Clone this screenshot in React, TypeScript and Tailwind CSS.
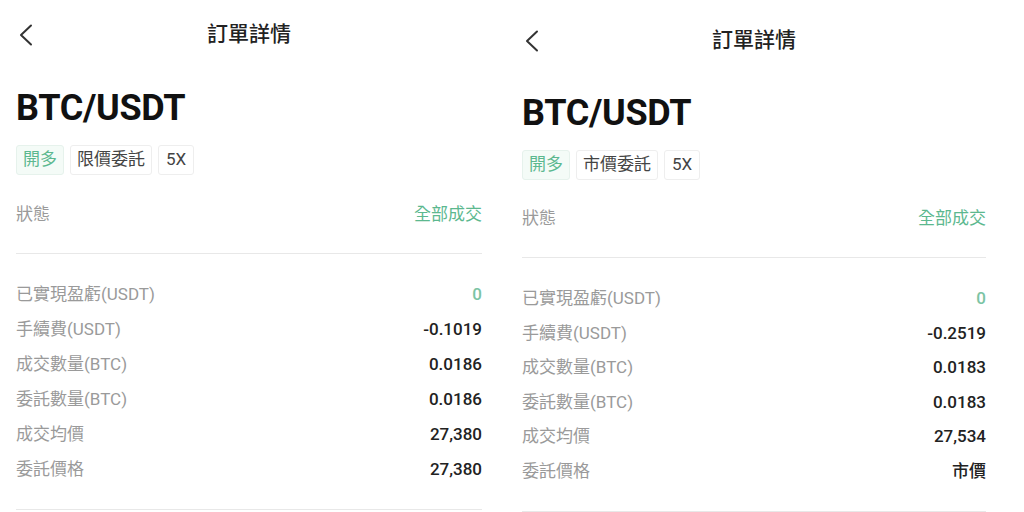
import React from "react";

type Row = { label: string; value: string; green?: boolean };

type OrderPanelProps = {
  orderType: string;
  rows: Row[];
  shift: string;
  rowH: string;
  width: string;
};

const font = "font-['Roboto','Noto_Sans_CJK_TC',sans-serif]";

const ChevronLeft = () => (
  <svg width="16" height="22" viewBox="0 0 16 22" fill="none">
    <path d="M13 1.5 3 11l10 9.5" stroke="#333" strokeWidth="2" strokeLinecap="round" strokeLinejoin="round" />
  </svg>
);

const OrderPanel: React.FC<OrderPanelProps> = ({ orderType, rows, shift, rowH, width }) => {
  return (
    <section className={`flex flex-col px-4 ${width} ${shift}`}>
      <header className="relative h-[70px] flex items-center justify-center">
        <span className="absolute left-[2px] top-[24px]">
          <ChevronLeft />
        </span>
        <h1 className="text-[21px] font-medium text-[#222]">訂單詳情</h1>
      </header>

      <h2 className="mt-[18px] text-[36px] leading-[40px] font-bold text-[#111] tracking-[-0.3px]">BTC/USDT</h2>

      <div className="mt-[17px] flex gap-[6px] h-[30px]">
        <span className="px-[6px] flex items-center rounded-[3px] border border-[#e6f2ec] bg-[#f4fbf7] text-[17px] text-[#5cb88f]">
          開多
        </span>
        <span className="px-[6px] flex items-center rounded-[3px] border border-[#eeeeee] text-[17px] text-[#444]">
          {orderType}
        </span>
        <span className="px-[7px] flex items-center rounded-[3px] border border-[#eeeeee] text-[17px] text-[#444]">
          5X
        </span>
      </div>

      <div className="mt-[22px] h-[35px] flex items-center justify-between text-[17px]">
        <span className="text-[#9a9a9a]">狀態</span>
        <span className="text-[#5cb88f]">全部成交</span>
      </div>

      <div className="mt-[21px] h-px bg-[#e8e8e8]" />

      <ul className="mt-[23px] flex flex-col">
        {rows.map((row) => (
          <li key={row.label} className={`${rowH} flex items-center justify-between text-[17px]`}>
            <span className="text-[#9a9a9a]">{row.label}</span>
            <span className={row.green ? "text-[#7cc4a4] font-medium" : "text-[#222] font-medium"}>{row.value}</span>
          </li>
        ))}
      </ul>

      <div className="mt-[22px] h-px bg-[#e8e8e8]" />
    </section>
  );
};

const App: React.FC = () => {
  return (
    <main className={`w-[1024px] h-[512px] overflow-hidden bg-white flex gap-[8px] ${font}`}>
      <OrderPanel
        orderType="限價委託"
        width="w-[498px]"
        shift="pt-0"
        rowH="h-[35px]"
        rows={[
          { label: "已實現盈虧(USDT)", value: "0", green: true },
          { label: "手續費(USDT)", value: "-0.1019" },
          { label: "成交數量(BTC)", value: "0.0186" },
          { label: "委託數量(BTC)", value: "0.0186" },
          { label: "成交均價", value: "27,380" },
          { label: "委託價格", value: "27,380" },
        ]}
      />
      <OrderPanel
        orderType="市價委託"
        width="w-[496px]"
        shift="pt-[6px]"
        rowH="h-[34.6px]"
        rows={[
          { label: "已實現盈虧(USDT)", value: "0", green: true },
          { label: "手續費(USDT)", value: "-0.2519" },
          { label: "成交數量(BTC)", value: "0.0183" },
          { label: "委託數量(BTC)", value: "0.0183" },
          { label: "成交均價", value: "27,534" },
          { label: "委託價格", value: "市價" },
        ]}
      />
    </main>
  );
};

export default App;
